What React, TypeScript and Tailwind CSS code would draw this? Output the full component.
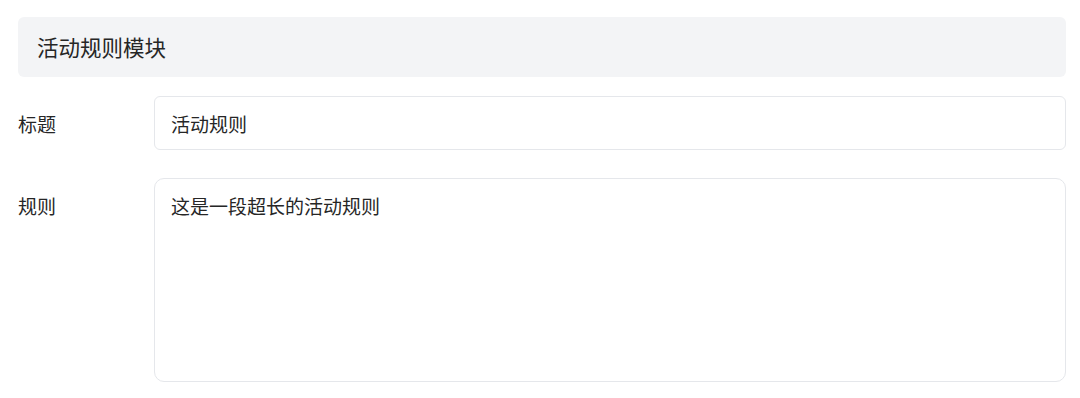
import React from 'react';

const font = { fontFamily: '"Noto Sans CJK SC", "Noto Sans", sans-serif' };

export default function App() {
    return (
        <div className="w-[1080px] h-[398px] bg-white text-[#262626]" style={font}>
            <div className="ml-[18px] w-[1048px] pt-[17px]">
                {/* Section header */}
                <div className="h-[60px] rounded-[6px] bg-[#f3f4f6] flex items-center pl-[19px]">
                    <span className="text-[21.5px] leading-none">活动规则模块</span>
                </div>

                {/* Title row */}
                <div className="flex items-start mt-[19px]">
                    <label className="w-[136px] shrink-0 pt-[14px] text-[19px] leading-[28px]">标题</label>
                    <input
                        className="flex-1 h-[54px] rounded-[6px] border border-[#e5e7eb] px-[16px] text-[19px] outline-none text-[#262626]"
                        style={font}
                        defaultValue="活动规则"
                    />
                </div>

                {/* Rules row */}
                <div className="flex items-start mt-[28px]">
                    <label className="w-[136px] shrink-0 pt-[14px] text-[19px] leading-[28px]">规则</label>
                    <textarea
                        className="flex-1 h-[204px] rounded-[10px] border border-[#e5e7eb] px-[16px] pt-[13px] text-[19px] leading-[28px] outline-none resize-none text-[#262626]"
                        style={font}
                        defaultValue="这是一段超长的活动规则"
                    />
                </div>
            </div>
        </div>
    );
}
